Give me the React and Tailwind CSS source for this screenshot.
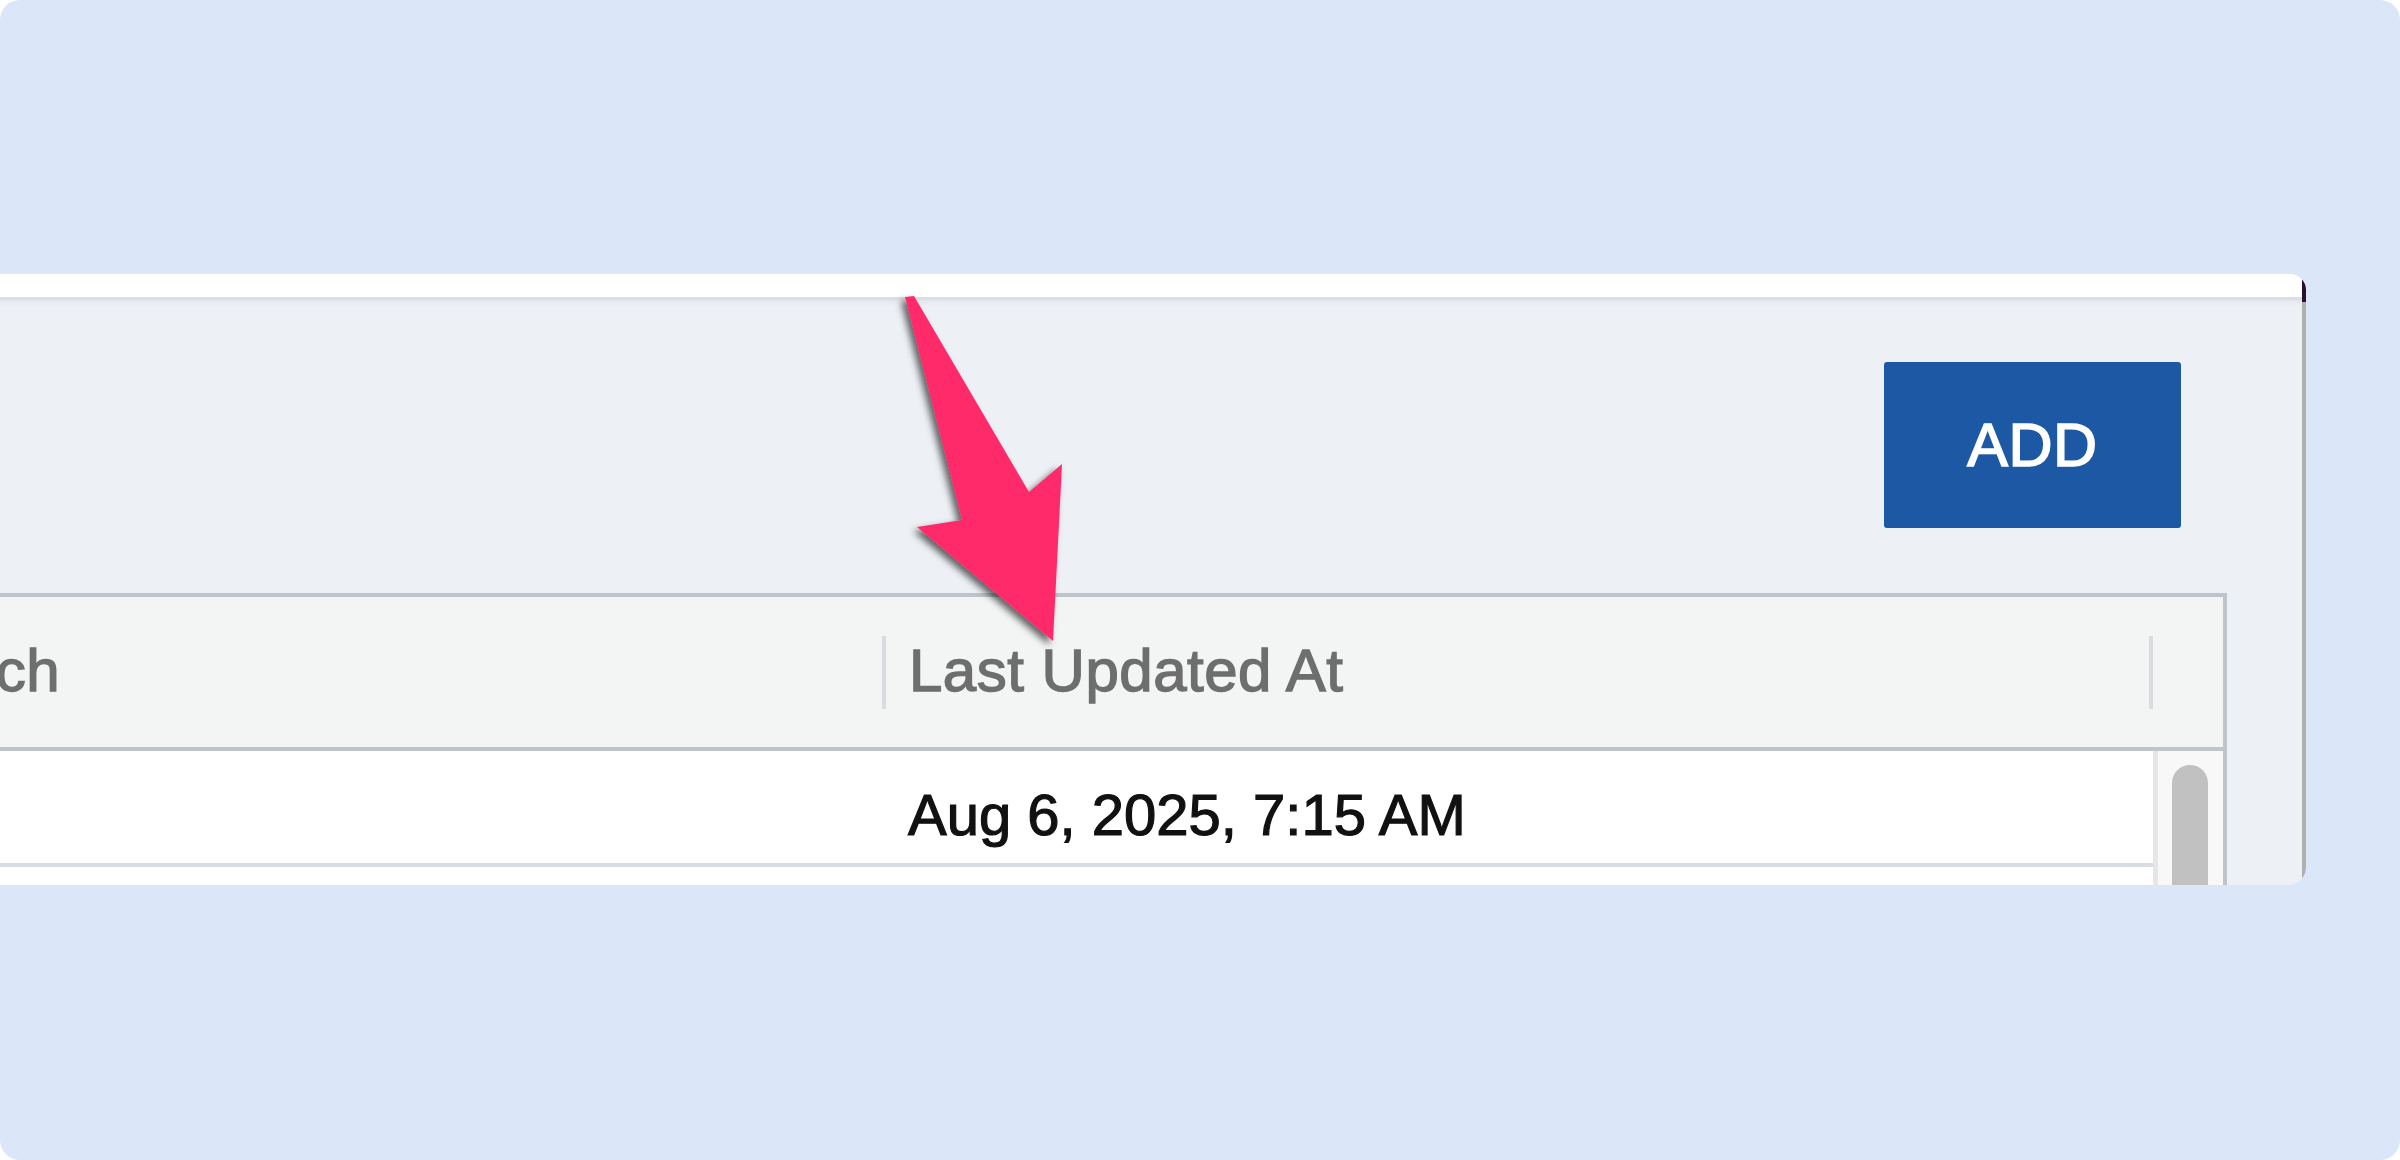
import React from "react";

const FONT = "font-['Liberation_Sans',Arial,sans-serif]";

function Arrow() {
  return (
    <svg
      className="absolute left-[880px] top-[280px] overflow-visible"
      width="200"
      height="380"
      viewBox="0 0 200 380"
    >
      <defs>
        <filter id="arrowShadow" x="-30%" y="-20%" width="160%" height="140%">
          <feDropShadow dx="-4" dy="4" stdDeviation="3.5" floodColor="#000" floodOpacity="0.6" />
        </filter>
      </defs>
      <polygon
        points="25,17 34,16 149,212 182,184 173,361 37,247 82,240"
        fill="#fe2b6b"
        filter="url(#arrowShadow)"
      />
    </svg>
  );
}

function Scrollbar() {
  return (
    <div className="w-[70px] shrink-0 border-l-[5px] border-[#e6e6e6] bg-[#f8f8f8]">
      <div className="ml-[14px] mt-[14px] w-[36px] h-[300px] rounded-t-full bg-[#c1c1c1]" />
    </div>
  );
}

function Table() {
  return (
    <div className="ml-[-156px] mr-[75px] flex-1 min-h-0 flex flex-col border-t-4 border-r-4 border-[#bec4c9]">
      <div className="h-[154px] shrink-0 flex items-start bg-[#f3f5f5] border-b-4 border-[#bec4c9]">
        <div className="w-[1038px] pl-[23px] pt-[44px] text-[60px] leading-none tracking-[0.5px] text-[#6e6e6e] whitespace-nowrap [-webkit-text-stroke:1.4px_#6e6e6e]">
          Branch
        </div>
        <div className="w-[4px] h-[73px] mt-[39px] bg-[#d9dcdf]" />
        <div className="w-[1263px] pl-[23px] pt-[44px] text-[60px] leading-none tracking-[0.5px] text-[#6e6e6e] whitespace-nowrap [-webkit-text-stroke:1.4px_#6e6e6e]">
          Last Updated At
        </div>
        <div className="w-[4px] h-[73px] mt-[39px] bg-[#d9dcdf]" />
        <div className="flex-1" />
      </div>
      <div className="flex-1 min-h-0 flex bg-white">
        <div className="flex-1 flex flex-col">
          <div className="h-[116px] flex border-b-4 border-[#d8dde1]">
            <div className="w-[1042px]" />
            <div className="pl-[22px] pt-[35px] text-[58px] leading-none text-[#111111] whitespace-nowrap [-webkit-text-stroke:1.2px_#111111]">
              Aug 6, 2025, 7:15 AM
            </div>
          </div>
          <div className="flex-1" />
        </div>
        <Scrollbar />
      </div>
    </div>
  );
}

function Screenshot() {
  return (
    <div className="flex w-[2306px] h-[611px] rounded-tr-[16px] rounded-br-[18px] overflow-hidden">
      <div className="flex-1 min-w-0 flex flex-col bg-[#edf0f5]">
        <div className="h-[23px] shrink-0 bg-white" />
        <div className="h-[3px] shrink-0 bg-[#dadfe5]" />
        <div className="h-[6px] shrink-0 bg-gradient-to-b from-[#e3e7ed] to-[#edf0f5]" />
        <div className="h-[287px] shrink-0 flex justify-end pt-[56px] pr-[121px]">
          <button className="w-[297px] h-[166px] rounded-[3px] bg-[#1d58a5] text-white text-[61px] leading-none tracking-[0.5px] [-webkit-text-stroke:1.6px_#ffffff]">
            ADD
          </button>
        </div>
        <Table />
      </div>
      <div className="w-[4px] shrink-0 flex flex-col">
        <div className="h-[28px] bg-[#2b0d35]" />
        <div className="flex-1 bg-[#b0b0b0]" />
      </div>
    </div>
  );
}

export default function App() {
  return (
    <div className={`w-[2400px] h-[1160px] bg-white ${FONT}`}>
      <div className="relative w-full h-full rounded-[20px] bg-[#dbe7f8] pt-[274px] overflow-hidden">
        <Screenshot />
        <Arrow />
      </div>
    </div>
  );
}
